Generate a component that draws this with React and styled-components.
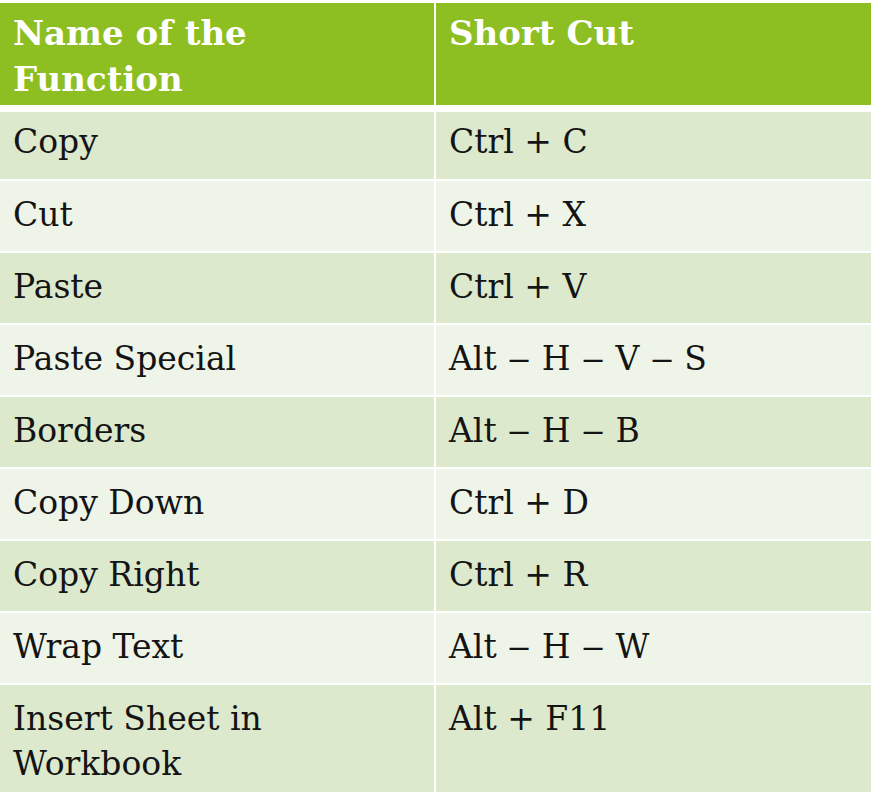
import React from "react";
import styled, { createGlobalStyle } from "styled-components";

const GlobalStyle = createGlobalStyle`
  html, body {
    margin: 0;
    padding: 0;
    background: #ffffff;
  }
`;

const Page = styled.div`
  padding-top: 3px;
  width: 874px;
  height: 798px;
  box-sizing: border-box;
  font-family: "DejaVu Serif", "Liberation Serif", serif;
`;

const Grid = styled.div`
  display: grid;
  grid-template-columns: 434px 435px;
  column-gap: 2px;
  row-gap: 2px;
`;

const HeadCell = styled.div`
  background: #8dbf22;
  color: #ffffff;
  font-weight: bold;
  font-size: 34px;
  line-height: 46px;
  height: 102px;
  box-sizing: border-box;
  padding: 7px 14px 0 13px;
  margin-bottom: 5px;
`;

const Cell = styled.div`
  background: ${(p) => (p.$odd ? "#dce9cd" : "#eef4e8")};
  color: #141414;
  font-size: 33px;
  line-height: 45px;
  min-height: ${(p) => p.$h}px;
  box-sizing: border-box;
  padding: ${(p) => (p.$first ? 7 : 11)}px 14px 6px 13px;
`;

// Georgia's dash is wider than DejaVu's, so stretch it a bit
const Dash = styled.span`
  display: inline-block;
  width: 24px;
  text-align: center;
  transform: scaleX(1.4);
`;

const rows = [
  ["Copy", "Ctrl + C"],
  ["Cut", "Ctrl + X"],
  ["Paste", "Ctrl + V"],
  ["Paste Special", "Alt – H – V – S"],
  ["Borders", "Alt – H – B"],
  ["Copy Down", "Ctrl + D"],
  ["Copy Right", "Ctrl + R"],
  ["Wrap Text", "Alt – H – W"],
  ["Insert Sheet in Workbook", "Alt + F11"],
];

const renderKey = (key) =>
  key.split(" – ").map((part, i) => (
    <React.Fragment key={i}>
      {i > 0 && <> <Dash>–</Dash> </>}
      {part}
    </React.Fragment>
  ));

export default function App() {
  return (
    <Page>
      <GlobalStyle />
      <Grid>
        <HeadCell>
          Name of the
          <br />
          Function
        </HeadCell>
        <HeadCell>Short Cut</HeadCell>
        {rows.map(([name, key], i) => {
          const props = { $odd: i % 2 === 0, $first: i === 0, $h: i === 0 ? 67 : 70 };
          return (
            <React.Fragment key={name}>
              <Cell {...props}>
                {i === rows.length - 1 ? (
                  <>
                    Insert Sheet in
                    <br />
                    Workbook
                  </>
                ) : (
                  name
                )}
              </Cell>
              <Cell {...props}>{renderKey(key)}</Cell>
            </React.Fragment>
          );
        })}
      </Grid>
    </Page>
  );
}
